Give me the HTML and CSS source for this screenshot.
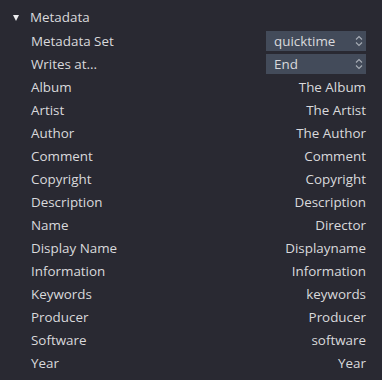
FILE: index.html
```
<!DOCTYPE html>
<html>
<head>
<meta charset="utf-8">
<link rel="stylesheet" href="styles.css">
</head>
<body>
<div class="panel">
  <div class="header">
    <span class="tri"></span>
    <span class="title">Metadata</span>
  </div>
  <div class="rows">
    <div class="row"><span class="label">Metadata Set</span><div class="select"><span>quicktime</span><svg class="chev" width="8" height="12" viewBox="0 0 8 12"><path d="M1 4.5 L4 1.5 L7 4.5 M1 7.5 L4 10.5 L7 7.5" fill="none" stroke="#a8adb6" stroke-width="1.1"/></svg></div></div>
    <div class="row"><span class="label">Writes at...</span><div class="select"><span>End</span><svg class="chev" width="8" height="12" viewBox="0 0 8 12"><path d="M1 4.5 L4 1.5 L7 4.5 M1 7.5 L4 10.5 L7 7.5" fill="none" stroke="#a8adb6" stroke-width="1.1"/></svg></div></div>
    <div class="row"><span class="label">Album</span><span class="value">The Album</span></div>
    <div class="row"><span class="label">Artist</span><span class="value">The Artist</span></div>
    <div class="row"><span class="label">Author</span><span class="value">The Author</span></div>
    <div class="row"><span class="label">Comment</span><span class="value">Comment</span></div>
    <div class="row"><span class="label">Copyright</span><span class="value">Copyright</span></div>
    <div class="row"><span class="label">Description</span><span class="value">Description</span></div>
    <div class="row"><span class="label">Name</span><span class="value">Director</span></div>
    <div class="row"><span class="label">Display Name</span><span class="value">Displayname</span></div>
    <div class="row"><span class="label">Information</span><span class="value">Information</span></div>
    <div class="row"><span class="label">Keywords</span><span class="value">keywords</span></div>
    <div class="row"><span class="label">Producer</span><span class="value">Producer</span></div>
    <div class="row"><span class="label">Software</span><span class="value">software</span></div>
    <div class="row"><span class="label">Year</span><span class="value">Year</span></div>
  </div>
</div>
</body>
</html>
```
FILE: styles.css
```
html, body {
  margin: 0;
  padding: 0;
  background: #292932;
}
body {
  width: 382px;
  height: 380px;
  overflow: hidden;
  font-family: "Open Sans", "Noto Sans", sans-serif;
  font-size: 13.4px;
  color: #d9d9dc;
}
.panel {
  padding: 6px 16px 0 13px;
}
.header {
  display: flex;
  align-items: center;
  height: 22px;
}
.tri {
  width: 0;
  height: 0;
  border-left: 3.5px solid transparent;
  border-right: 3.5px solid transparent;
  border-top: 6px solid #ececee;
  margin-right: 11px;
  margin-top: 1px;
}
.rows {
  display: flex;
  flex-direction: column;
  padding-left: 18px;
  margin-top: 1px;
}
.row {
  display: flex;
  justify-content: space-between;
  align-items: center;
  height: 23.05px;
}
.select {
  width: 100px;
  height: 20px;
  background: #434b5a;
  display: flex;
  align-items: center;
  justify-content: space-between;
  padding: 0 3px 0 8px;
  box-sizing: border-box;
}
.chev {
  display: block;
}
```
